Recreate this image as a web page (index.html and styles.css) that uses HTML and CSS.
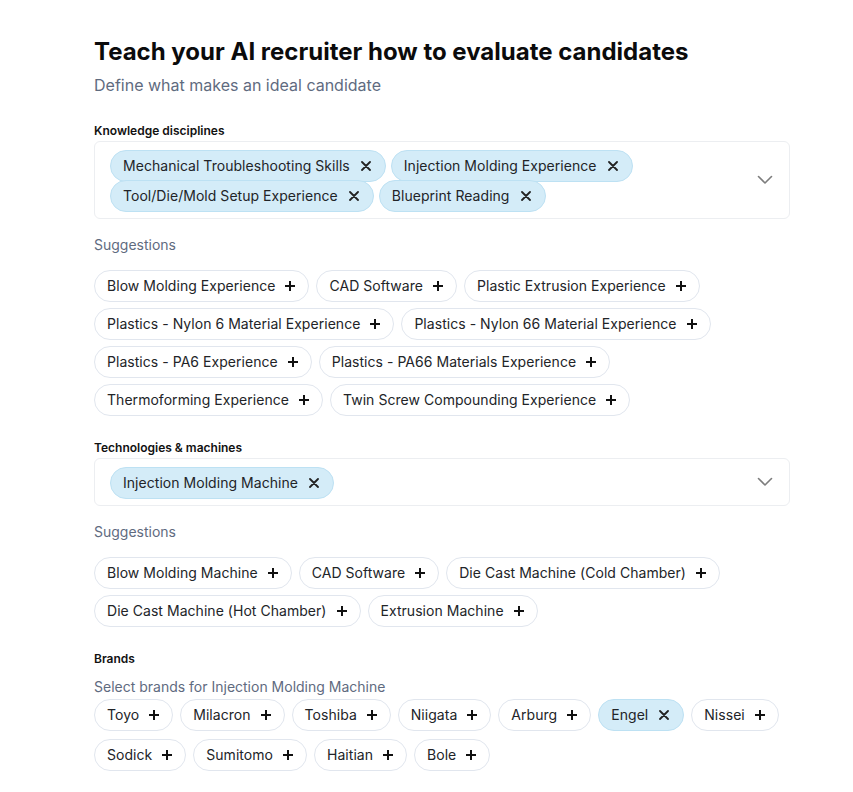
FILE: index.html
```html
<!DOCTYPE html>
<html>
<head>
<meta charset="utf-8">
<link rel="stylesheet" href="styles.css">
</head>
<body>
<div class="page">
  <h1 class="title">Teach your AI recruiter how to evaluate candidates</h1>
  <p class="subtitle">Define what makes an ideal candidate</p>

  <section class="section first">
    <div class="label">Knowledge disciplines</div>
    <div class="select-box">
      <div class="selected">
        <span class="chip sel">Mechanical Troubleshooting Skills<svg class="x" viewBox="0 0 10 10"><path d="M1 1L9 9M9 1L1 9"/></svg></span>
        <span class="chip sel">Injection Molding Experience<svg class="x" viewBox="0 0 10 10"><path d="M1 1L9 9M9 1L1 9"/></svg></span>
        <span class="chip sel">Tool/Die/Mold Setup Experience<svg class="x" viewBox="0 0 10 10"><path d="M1 1L9 9M9 1L1 9"/></svg></span>
        <span class="chip sel">Blueprint Reading<svg class="x" viewBox="0 0 10 10"><path d="M1 1L9 9M9 1L1 9"/></svg></span>
      </div>
      <svg class="chev" viewBox="0 0 16 10"><path d="M1.5 1.5L8 8L14.5 1.5"/></svg>
    </div>
    <div class="sugg-label">Suggestions</div>
    <div class="chips">
      <span class="chip">Blow Molding Experience<svg class="plus" viewBox="0 0 12 12"><path d="M6 1V11M1 6H11"/></svg></span>
      <span class="chip">CAD Software<svg class="plus" viewBox="0 0 12 12"><path d="M6 1V11M1 6H11"/></svg></span>
      <span class="chip">Plastic Extrusion Experience<svg class="plus" viewBox="0 0 12 12"><path d="M6 1V11M1 6H11"/></svg></span>
      <span class="chip">Plastics - Nylon 6 Material Experience<svg class="plus" viewBox="0 0 12 12"><path d="M6 1V11M1 6H11"/></svg></span>
      <span class="chip">Plastics - Nylon 66 Material Experience<svg class="plus" viewBox="0 0 12 12"><path d="M6 1V11M1 6H11"/></svg></span>
      <span class="chip">Plastics - PA6 Experience<svg class="plus" viewBox="0 0 12 12"><path d="M6 1V11M1 6H11"/></svg></span>
      <span class="chip">Plastics - PA66 Materials Experience<svg class="plus" viewBox="0 0 12 12"><path d="M6 1V11M1 6H11"/></svg></span>
      <span class="chip">Thermoforming Experience<svg class="plus" viewBox="0 0 12 12"><path d="M6 1V11M1 6H11"/></svg></span>
      <span class="chip">Twin Screw Compounding Experience<svg class="plus" viewBox="0 0 12 12"><path d="M6 1V11M1 6H11"/></svg></span>
    </div>
  </section>

  <section class="section">
    <div class="label">Technologies &amp; machines</div>
    <div class="select-box">
      <div class="selected">
        <span class="chip sel">Injection Molding Machine<svg class="x" viewBox="0 0 10 10"><path d="M1 1L9 9M9 1L1 9"/></svg></span>
      </div>
      <svg class="chev" viewBox="0 0 16 10"><path d="M1.5 1.5L8 8L14.5 1.5"/></svg>
    </div>
    <div class="sugg-label">Suggestions</div>
    <div class="chips">
      <span class="chip">Blow Molding Machine<svg class="plus" viewBox="0 0 12 12"><path d="M6 1V11M1 6H11"/></svg></span>
      <span class="chip">CAD Software<svg class="plus" viewBox="0 0 12 12"><path d="M6 1V11M1 6H11"/></svg></span>
      <span class="chip">Die Cast Machine (Cold Chamber)<svg class="plus" viewBox="0 0 12 12"><path d="M6 1V11M1 6H11"/></svg></span>
      <span class="chip">Die Cast Machine (Hot Chamber)<svg class="plus" viewBox="0 0 12 12"><path d="M6 1V11M1 6H11"/></svg></span>
      <span class="chip">Extrusion Machine<svg class="plus" viewBox="0 0 12 12"><path d="M6 1V11M1 6H11"/></svg></span>
    </div>
  </section>

  <section class="section">
    <div class="label">Brands</div>
    <div class="brands-hint">Select brands for Injection Molding Machine</div>
    <div class="chips brands">
      <span class="chip">Toyo<svg class="plus" viewBox="0 0 12 12"><path d="M6 1V11M1 6H11"/></svg></span>
      <span class="chip">Milacron<svg class="plus" viewBox="0 0 12 12"><path d="M6 1V11M1 6H11"/></svg></span>
      <span class="chip">Toshiba<svg class="plus" viewBox="0 0 12 12"><path d="M6 1V11M1 6H11"/></svg></span>
      <span class="chip">Niigata<svg class="plus" viewBox="0 0 12 12"><path d="M6 1V11M1 6H11"/></svg></span>
      <span class="chip">Arburg<svg class="plus" viewBox="0 0 12 12"><path d="M6 1V11M1 6H11"/></svg></span>
      <span class="chip sel">Engel<svg class="x" viewBox="0 0 10 10"><path d="M1 1L9 9M9 1L1 9"/></svg></span>
      <span class="chip">Nissei<svg class="plus" viewBox="0 0 12 12"><path d="M6 1V11M1 6H11"/></svg></span>
      <span class="chip">Sodick<svg class="plus" viewBox="0 0 12 12"><path d="M6 1V11M1 6H11"/></svg></span>
      <span class="chip">Sumitomo<svg class="plus" viewBox="0 0 12 12"><path d="M6 1V11M1 6H11"/></svg></span>
      <span class="chip">Haitian<svg class="plus" viewBox="0 0 12 12"><path d="M6 1V11M1 6H11"/></svg></span>
      <span class="chip">Bole<svg class="plus" viewBox="0 0 12 12"><path d="M6 1V11M1 6H11"/></svg></span>
    </div>
  </section>
</div>
</body>
</html>
```

FILE: styles.css
```css
* { box-sizing: border-box; }
html, body { margin: 0; padding: 0; background: #ffffff; }
body { font-family: Inter, "Noto Sans", sans-serif; color: #1f2328; }

.page {
  width: 696px;
  margin-left: 94px;
  padding-top: 36px;
}

.title {
  margin: 0;
  font-size: 24px;
  line-height: 32px;
  font-weight: 700;
  color: #0b0b0c;
}

.subtitle {
  margin: 5px 0 0;
  font-size: 16px;
  line-height: 24px;
  color: #5f6b7f;
}

.section { margin-top: 24px; }
.section.first { margin-top: 26px; }

.label {
  font-size: 12px;
  line-height: 16px;
  font-weight: 600;
  color: #111;
}

.select-box {
  margin-top: 2px;
  border: 1px solid #eceef1;
  border-radius: 6px;
  padding: 8px 16px 8px 15px;
  display: flex;
  align-items: center;
  gap: 12px;
}

.selected {
  flex: 1;
  display: flex;
  flex-wrap: wrap;
  column-gap: 5px;
}
.selected .chip { margin-bottom: -2px; }

.chev {
  width: 16px;
  height: 10px;
  fill: none;
  stroke: #7d7d7d;
  stroke-width: 1.6;
  stroke-linecap: round;
  stroke-linejoin: round;
}

.sugg-label {
  margin-top: 16px;
  font-size: 14px;
  line-height: 20px;
  color: #5f6b7f;
}

.chips {
  margin-top: 15px;
  display: flex;
  flex-wrap: wrap;
  gap: 6px 7px;
}

.brands-hint {
  margin-top: 10px;
  font-size: 14px;
  line-height: 20px;
  color: #5f6b7f;
}
.chips.brands { margin-top: 2px; gap: 8px 7px; }

.chip {
  display: inline-flex;
  align-items: center;
  height: 32px;
  padding: 0 12px;
  border: 1px solid #e1e6ee;
  border-radius: 16px;
  background: #ffffff;
  font-size: 14px;
  line-height: 20px;
  letter-spacing: 0.04px;
  color: #222428;
  white-space: nowrap;
}
.chip.sel {
  background: #d4ecf8;
  border-color: #bde1f3;
}

.plus {
  width: 12px;
  height: 12px;
  margin-left: 9px;
  fill: none;
  stroke: #111;
  stroke-width: 2;
}

.x {
  width: 10px;
  height: 10px;
  margin-left: 11px;
  margin-right: 2px;
  fill: none;
  stroke: #222;
  stroke-width: 1.8;
  stroke-linecap: round;
}
```
